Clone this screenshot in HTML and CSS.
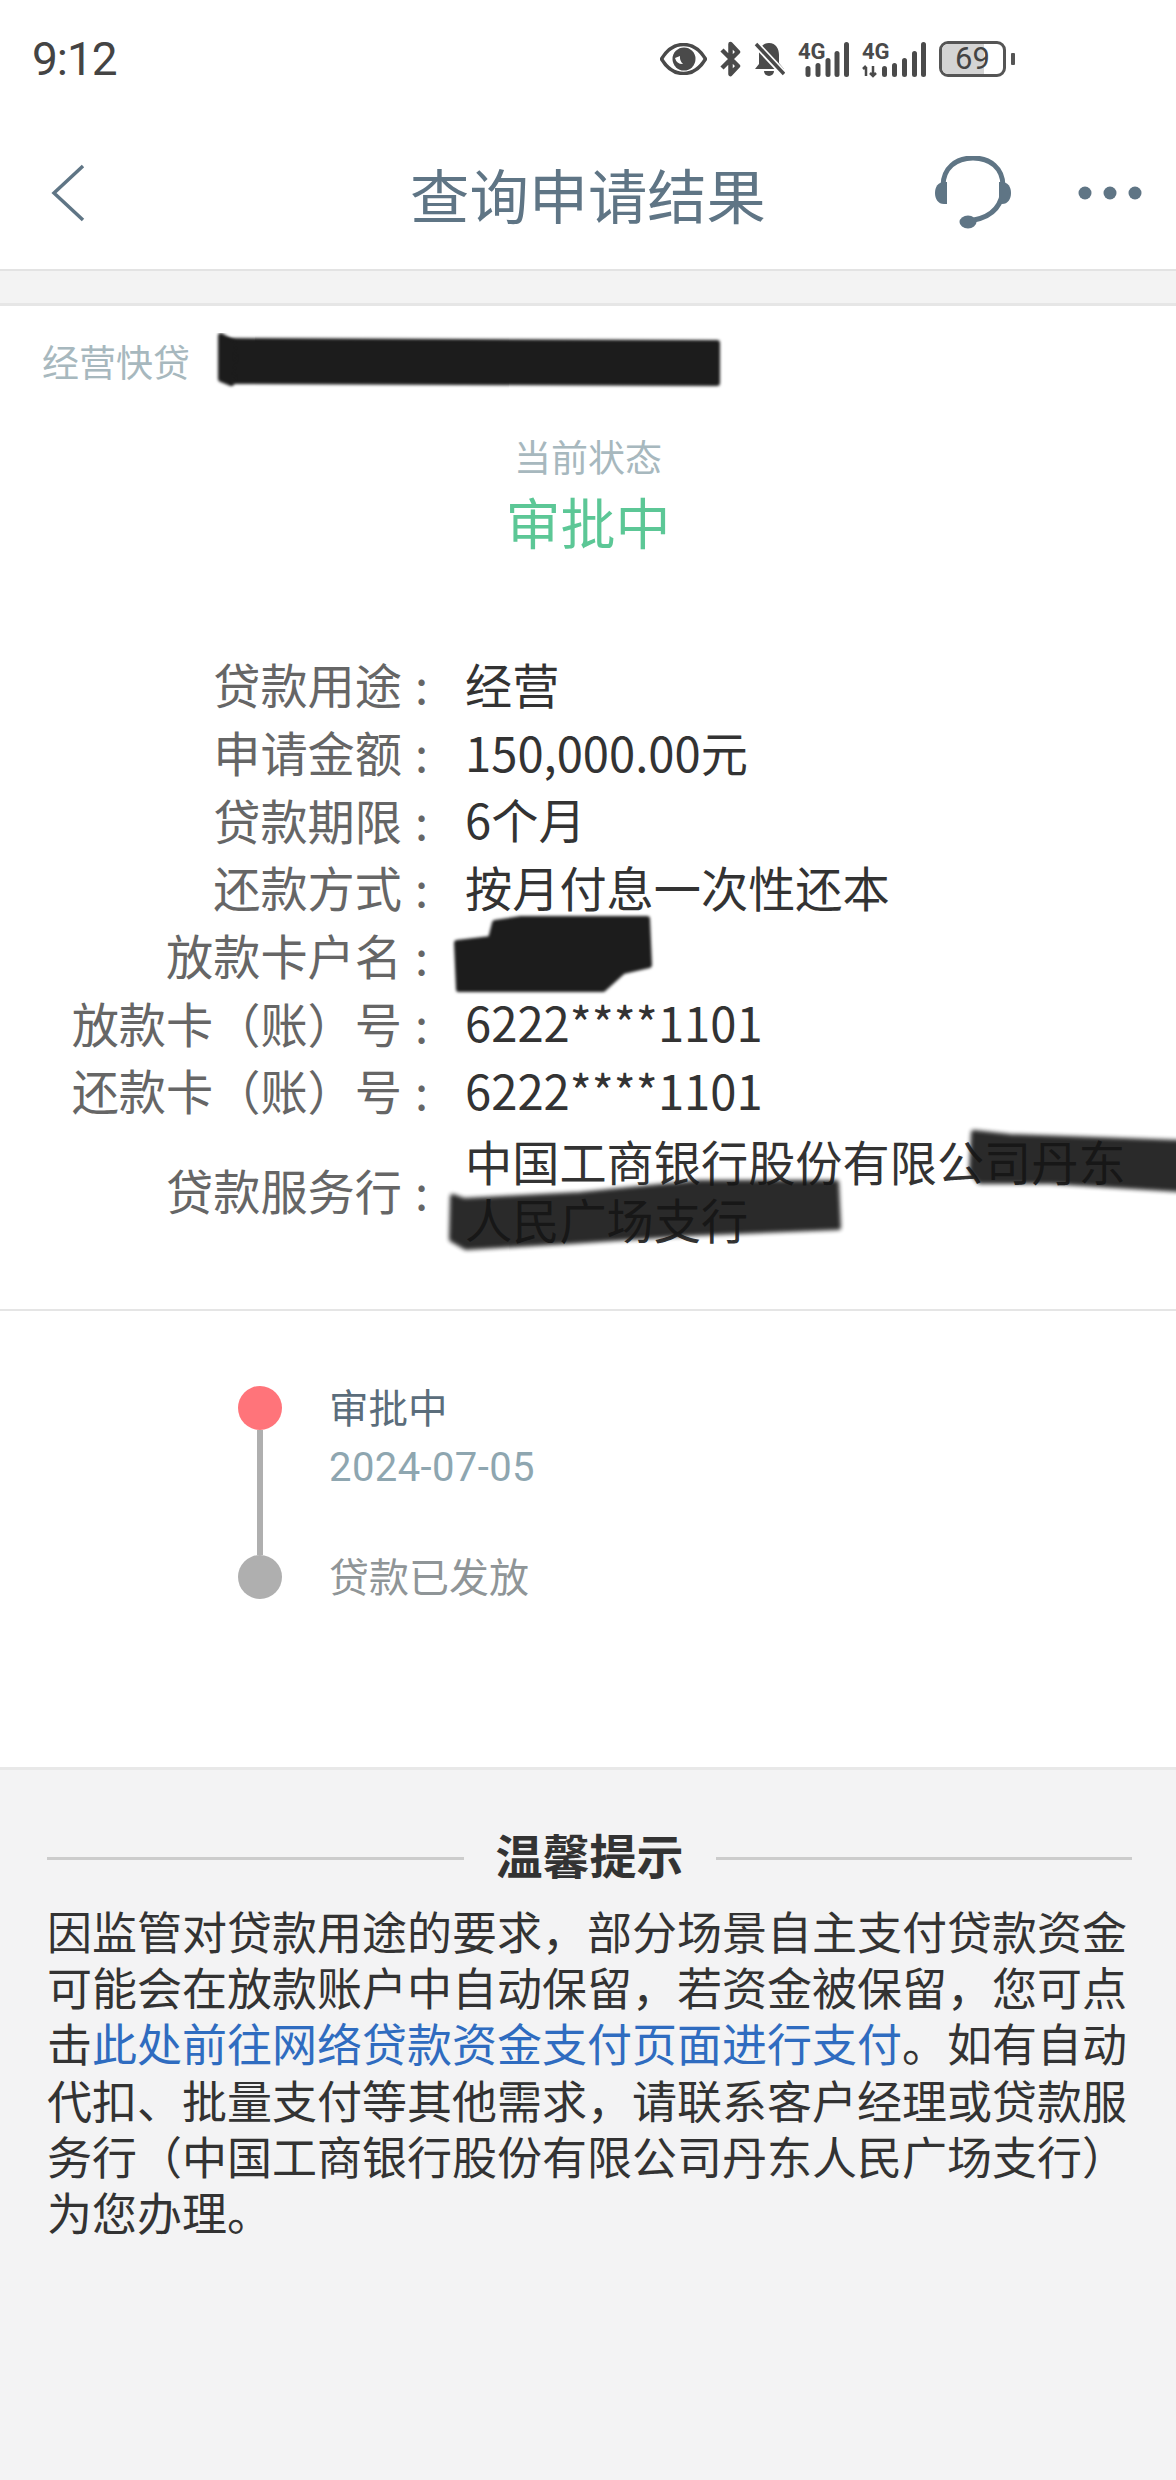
FILE: index.html
```html
<!DOCTYPE html>
<html lang="zh-CN">
<head>
  <meta charset="UTF-8">
  <meta name="viewport" content="width=device-width, initial-scale=1.0">
  <title>查询申请结果</title>
  <link rel="stylesheet" href="styles.css">
</head>
<body>

  <div class="status-bar">
    <span class="time">9:12</span>
    <div class="status-icons">
      <svg width="47" height="32" viewBox="0 0 47 32">
        <path d="M1.500 16C8 5 16 1.500 23.500 1.500S39 5 45.500 16C39 27 31 30.500 23.500 30.500S8 27 1.500 16Z" fill="none" stroke="#4a4a4a" stroke-width="3.500"/>
        <circle cx="24" cy="16" r="11.500" fill="#4a4a4a"/>
        <path d="M15 15a8 8 0 0 0 8 6a9 9 0 0 1-3-8Z" fill="#fff"/>
      </svg>
      <svg width="21" height="36" viewBox="0 0 21 36">
        <path d="M2 9L18 25L10.500 33V3L18 11L2 27" fill="none" stroke="#4a4a4a" stroke-width="4.500" stroke-linejoin="round"/>
      </svg>
      <svg width="31" height="36" viewBox="0 0 31 36">
        <path d="M15 2C22 2 25 8 25 14V22L30 28H1L5 23V14C5 8 8 2 15 2Z" fill="#4a4a4a"/>
        <path d="M10 30H20A5 5 0 0 1 10 30Z" fill="#4a4a4a"/>
        <path d="M0 1L30 33" stroke="#fff" stroke-width="7"/>
        <path d="M2 3L30 33" stroke="#4a4a4a" stroke-width="3.500"/>
      </svg>
      <svg width="51" height="42" viewBox="0 -3 51 42">
        <text x="0" y="18" class="net-text">4G</text>
        <rect x="7.500" y="25" width="5" height="11" rx="2.500" class="bar"/>
        <rect x="17.500" y="22" width="5" height="14" rx="2.500" class="bar"/>
        <rect x="27.500" y="17" width="5" height="19" rx="2.500" class="bar"/>
        <rect x="36.500" y="10" width="5" height="26" rx="2.500" class="bar"/>
        <rect x="46" y="1" width="5" height="35" rx="2.500" class="bar"/>
      </svg>
      <svg width="64" height="42" viewBox="0 -3 64 42">
        <text x="0" y="18" class="net-text">4G</text>
        <path d="M4 26V35M1 28L4 25M11 25V34M8 32L11 35L14 32" fill="none" stroke="#4a4a4a" stroke-width="2.500"/>
        <rect x="20" y="25" width="5" height="11" rx="2.500" class="bar"/>
        <rect x="30" y="22" width="5" height="14" rx="2.500" class="bar"/>
        <rect x="40" y="17" width="5" height="19" rx="2.500" class="bar"/>
        <rect x="50" y="10" width="5" height="26" rx="2.500" class="bar"/>
        <rect x="59" y="1" width="5" height="35" rx="2.500" class="bar"/>
      </svg>
      <div class="battery">
        <div class="battery-body">
          <div class="battery-fill"></div>
          <span class="battery-num">69</span>
        </div>
        <div class="battery-tip"></div>
      </div>
    </div>
  </div>

  <div class="nav">
    <svg class="nav-back" width="36" height="58" viewBox="0 0 36 58">
      <path d="M33 2L4 29L33 56" fill="none" stroke="#5f7585" stroke-width="3.500"/>
    </svg>
    <h1 class="nav-title">查询申请结果</h1>
    <div class="nav-actions">
      <svg width="78" height="74" viewBox="0 0 78 74">
        <path d="M9 30C9 12 22 2 39 2S69 12 69 30C69 48 60 60 40 64" fill="none" stroke="#5f7585" stroke-width="5"/>
        <path d="M13 26V48H10C4 48 1 43 1 37S4 26 10 26Z" fill="#5f7585"/>
        <path d="M65 26V48H68C74 48 77 43 77 37S74 26 68 26Z" fill="#5f7585"/>
        <ellipse cx="34" cy="66" rx="8.500" ry="6.500" fill="#5f7585"/>
      </svg>
      <svg width="64" height="14" viewBox="0 0 64 14">
        <circle cx="7" cy="7" r="6.500" fill="#5f7585"/>
        <circle cx="32" cy="7" r="6.500" fill="#5f7585"/>
        <circle cx="57" cy="7" r="6.500" fill="#5f7585"/>
      </svg>
    </div>
  </div>
  <div class="band"></div>

  <div class="card">
    <div class="product">
      <span class="product-name">经营快贷</span>
      <svg class="product-mark" width="510" height="58" viewBox="0 0 510 58">
        <path d="M12 8L18 48L502 50L502 10Z" class="scribble-solid"/>
        <path d="M6 3L18 10L16 50L6 46Z" class="scribble-solid"/>
      </svg>
    </div>
    <div class="state">
      <div class="state-label">当前状态</div>
      <div class="state-value">审批中</div>
    </div>

    <div class="rows">
      <div class="row"><div class="row-label">贷款用途<span class="colon">:</span></div><div class="row-value">经营</div></div>
      <div class="row"><div class="row-label">申请金额<span class="colon">:</span></div><div class="row-value">150,000.00元</div></div>
      <div class="row"><div class="row-label">贷款期限<span class="colon">:</span></div><div class="row-value">6个月</div></div>
      <div class="row"><div class="row-label">还款方式<span class="colon">:</span></div><div class="row-value">按月付息一次性还本</div></div>
      <div class="row">
        <div class="row-label">放款卡户名<span class="colon">:</span></div>
        <div class="row-value">
          <svg class="mark mark-name" width="200" height="78" viewBox="0 0 200 78">
            <path d="M4 28L38 24L42 8L68 4L194 4L196 50L170 56L150 74L6 74Z" class="scribble-solid"/>
          </svg>
        </div>
      </div>
      <div class="row"><div class="row-label">放款卡（账）号<span class="colon">:</span></div><div class="row-value">6222****1101</div></div>
      <div class="row"><div class="row-label">还款卡（账）号<span class="colon">:</span></div><div class="row-value">6222****1101</div></div>
      <div class="row row-multi">
        <div class="row-label">贷款服务行<span class="colon">:</span></div>
        <div class="row-value">
          中国工商银行股份有限公司丹东人民广场支行
          <svg class="mark mark-bank-a" width="210" height="60" viewBox="0 0 210 60">
            <path d="M4 2L40 6L210 12V58L80 50L10 50L2 40Z" class="scribble"/>
          </svg>
          <svg class="mark mark-bank-b" width="390" height="68" viewBox="0 0 390 68">
            <path d="M3 16L14 20L130 14L250 2L386 2L388 46L240 52L120 60L16 66L2 58Z" class="scribble"/>
          </svg>
        </div>
      </div>
    </div>
  </div>

  <div class="timeline">
    <div class="track">
      <div class="dot dot-active"></div>
      <div class="track-line"></div>
      <div class="dot"></div>
    </div>
    <div class="steps">
      <div class="step">
        <div class="step-title">审批中</div>
        <div class="step-date">2024-07-05</div>
      </div>
      <div class="step-title step-todo">贷款已发放</div>
    </div>
  </div>

  <div class="tips">
    <div class="tips-head">
      <div class="tips-line"></div>
      <h2 class="tips-title">温馨提示</h2>
      <div class="tips-line"></div>
    </div>
    <p class="tips-text">因监管对贷款用途的要求，部分场景自主支付贷款资金可能会在放款账户中自动保留，若资金被保留，您可点击<a class="tips-link" href="#">此处前往网络贷款资金支付页面进行支付</a>。如有自动代扣、批量支付等其他需求，请联系客户经理或贷款服务行（中国工商银行股份有限公司丹东人民广场支行）为您办理。</p>
  </div>

</body>
</html>
```

FILE: styles.css
```css
* {
  box-sizing: border-box;
}
html, body {
  margin: 0;
  padding: 0;
}
body {
  width: 1176px;
  height: 2480px;
  overflow: hidden;
  background-color: #fff;
  font-family: "Noto Sans CJK SC", sans-serif;
}

/* status bar */
.status-bar {
  height: 120px;
  display: flex;
  align-items: center;
  justify-content: space-between;
  padding: 0 161px 2px 32px;
}
.time {
  font-family: Roboto, sans-serif;
  font-size: 46px;
  letter-spacing: -1px;
  color: #444;
}
.status-icons {
  display: flex;
  align-items: center;
  gap: 13px;
}
.net-text {
  font-family: Roboto, sans-serif;
  font-size: 22px;
  font-weight: 700;
  fill: #4a4a4a;
}
.bar {
  fill: #4a4a4a;
}
.battery {
  display: flex;
  align-items: center;
  gap: 5px;
}
.battery-body {
  position: relative;
  width: 67px;
  height: 36px;
  border: 3px solid #555;
  border-radius: 9px;
  overflow: hidden;
  text-align: center;
}
.battery-fill {
  position: absolute;
  left: 0;
  top: 0;
  bottom: 0;
  width: 69%;
  background-color: #d4d4d4;
}
.battery-num {
  position: relative;
  font-family: Roboto, sans-serif;
  font-size: 31px;
  line-height: 30px;
  color: #444;
}
.battery-tip {
  width: 4px;
  height: 12px;
  background-color: #555;
  border-radius: 1px;
}

/* nav */
.nav {
  height: 151px;
  display: grid;
  grid-template-columns: 300px 1fr 300px;
  align-items: center;
  padding-bottom: 3px;
  border-bottom: 2px solid #e3e3e3;
}
.nav-back {
  margin-left: 50px;
}
.nav-title {
  margin: 0;
  text-align: center;
  font-size: 59.300px;
  font-weight: 400;
  color: #5f7585;
}
.nav-actions {
  display: flex;
  align-items: center;
  justify-content: flex-end;
  gap: 66px;
  padding-right: 34px;
}
.band {
  height: 35px;
  background-color: #f3f3f3;
  border-bottom: 3px solid #e6e6e6;
}

/* card */
.card {
  height: 1005px;
  border-bottom: 2px solid #e5e5e5;
}
.product {
  height: 110px;
  display: flex;
  align-items: center;
  padding-left: 42px;
  gap: 25px;
}
.product-name {
  font-size: 37px;
  color: #a7b8be;
}
.product-mark {
  margin-top: 2px;
}
.scribble {
  fill: #141414;
  stroke: #141414;
  stroke-width: 6px;
  stroke-linejoin: round;
  opacity: 0.9;
  filter: blur(2px);
}
.scribble-solid {
  fill: #1c1c1c;
  stroke: #1c1c1c;
  stroke-width: 6px;
  stroke-linejoin: round;
  filter: blur(1.500px);
}
.state {
  text-align: center;
}
.state-label {
  margin-top: 13px;
  font-size: 37px;
  line-height: 54px;
  color: #a7b8be;
}
.state-value {
  margin-top: 3px;
  font-size: 55px;
  line-height: 68px;
  color: #5cc796;
}
.rows {
  margin-top: 96px;
}
.row {
  display: flex;
  height: 67.700px;
  align-items: center;
  font-size: 47.200px;
}
.row-label {
  flex: none;
  width: 465px;
  text-align: right;
  color: #666;
}
.colon {
  display: inline-block;
  width: 63px;
  padding-left: 13px;
  text-align: left;
}
.row-value {
  position: relative;
  flex: 1;
  color: #333;
  padding-right: 30px;
  line-height: 58px;
}
.row-multi {
  height: 116px;
  margin-top: 8px;
}
.mark {
  position: absolute;
  overflow: visible;
}
.mark-name {
  left: -12px;
  top: -40px;
}
.mark-bank-a {
  left: 505px;
  top: -1px;
}
.mark-bank-b {
  left: -15px;
  top: 49px;
}

/* timeline */
.timeline {
  height: 456px;
  display: flex;
  padding: 75px 0 0 238px;
  gap: 47px;
}
.track {
  width: 44px;
  height: 213px;
  display: flex;
  flex-direction: column;
  align-items: center;
}
.dot {
  flex: none;
  width: 44px;
  height: 44px;
  border-radius: 50%;
  background-color: #afafaf;
}
.dot-active {
  background-color: #ff747a;
}
.track-line {
  flex: 1;
  width: 6px;
  background-color: #afafaf;
}
.steps {
  margin-top: -2px;
}
.step {
  height: 169px;
}
.step-title {
  font-size: 39.500px;
  line-height: 44px;
  color: #5b6d7b;
}
.step-date {
  margin-top: 18px;
  font-family: Roboto, sans-serif;
  font-size: 40px;
  letter-spacing: 0.4px;
  line-height: 44px;
  color: #8ea6b0;
}
.step-todo {
  font-size: 40px;
  color: #8f9597;
}

/* tips */
.tips {
  height: 713px;
  padding: 54px 44px 0 47px;
  background-color: #f3f3f4;
  border-top: 3px solid #e8e8e8;
}
.tips-head {
  display: flex;
  align-items: center;
  gap: 32px;
}
.tips-line {
  flex: 1;
  height: 3px;
  background-color: #ccc;
}
.tips-title {
  margin: 0;
  padding-bottom: 8px;
  font-size: 47px;
  line-height: 60px;
  font-weight: 700;
  color: #333;
}
.tips-text {
  width: 1082px;
  margin: 11px 0 0 0;
  font-size: 45px;
  line-height: 56.200px;
  color: #333;
}
.tips-link {
  color: #2f6cc0;
  text-decoration: none;
}
```
